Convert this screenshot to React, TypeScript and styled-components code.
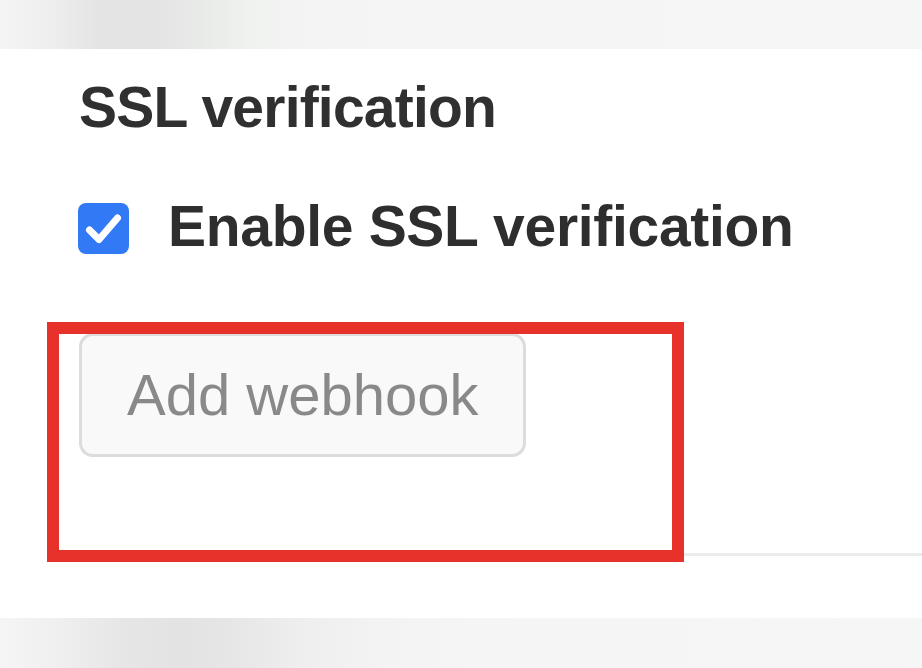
import React from "react";
import styled, { createGlobalStyle } from "styled-components";

const Global = createGlobalStyle`
  html, body { margin: 0; padding: 0; background: #ffffff; }
  body { font-family: "Liberation Sans", Arial, sans-serif; }
  #root { width: 922px; height: 668px; overflow: hidden; }
`;

const Page = styled.div`
  position: relative;
  width: 922px;
  height: 668px;
  display: flex;
  flex-direction: column;
  background: #ffffff;
  overflow: hidden;
`;

const Band = styled.div<{ $dark: string }>`
  flex: none;
  height: ${(p) => (p.$dark === "top" ? 49 : 50)}px;
  background: ${(p) =>
    p.$dark === "top"
      ? "linear-gradient(90deg, #f5f5f5 0px, #eeeeee 50px, #e4e4e4 100px, #e3e4e3 160px, #e8eae8 200px, #f0f2f0 250px, #f4f4f4 320px, #f5f5f5 420px, #f6f6f6 922px)"
      : "linear-gradient(90deg, #f5f5f6 0px, #efeff0 60px, #e6e6e6 120px, #e3e3e3 180px, #e6e6e6 230px, #eeeeee 300px, #f3f3f3 380px, #f5f5f5 460px, #f6f6f6 922px)"};
`;

const Main = styled.main`
  flex: 1;
  display: flex;
  flex-direction: column;
  align-items: flex-start;
  padding: 26px 0 0 79px;
`;

const Heading = styled.h3`
  margin: 0;
  font-size: 57px;
  line-height: 64px;
  font-weight: 700;
  color: #303030;
  letter-spacing: -0.8px;
`;

const CheckRow = styled.label`
  display: flex;
  align-items: flex-start;
  gap: 39px;
  margin-top: 55px;
  height: 64px;
`;

const Box = styled.span`
  flex: none;
  width: 51px;
  height: 51px;
  margin-top: 9px;
  margin-left: -1px;
  border-radius: 8px;
  background: #3179f5;
  display: flex;
  align-items: center;
  justify-content: center;
`;

const CheckLabel = styled.span`
  font-size: 57px;
  line-height: 64px;
  font-weight: 700;
  color: #2e2e2e;
  letter-spacing: -0.3px;
`;

const Button = styled.button`
  margin-top: 75px;
  box-sizing: border-box;
  height: 124px;
  padding: 0 45px;
  border: 3px solid #dcdcdc;
  border-radius: 14px;
  background: #f9f9f9;
  color: #898989;
  font-family: "Liberation Sans", Arial, sans-serif;
  font-size: 58px;
  line-height: 1;
  font-weight: 400;
`;

const Divider = styled.div`
  margin-top: 96px;
  align-self: stretch;
  height: 3px;
  background: #ececec;
`;

const Highlight = styled.div`
  position: absolute;
  left: 47px;
  top: 322px;
  width: 637px;
  height: 240px;
  box-sizing: border-box;
  border: 12px solid #e6322a;
  pointer-events: none;
`;

export default function App() {
  return (
    <>
      <Global />
      <Page>
        <Band $dark="top" />
        <Main>
          <Heading>SSL verification</Heading>
          <CheckRow>
            <Box>
              <svg width="51" height="51" viewBox="0 0 51 51">
                <path
                  d="M11.5 27 L21 36.5 L39.5 15"
                  fill="none"
                  stroke="#ffffff"
                  strokeWidth="7"
                  strokeLinecap="round"
                  strokeLinejoin="round"
                />
              </svg>
            </Box>
            <CheckLabel>Enable SSL verification</CheckLabel>
          </CheckRow>
          <Button>Add webhook</Button>
          <Divider />
        </Main>
        <Band $dark="bottom" />
        <Highlight />
      </Page>
    </>
  );
}
